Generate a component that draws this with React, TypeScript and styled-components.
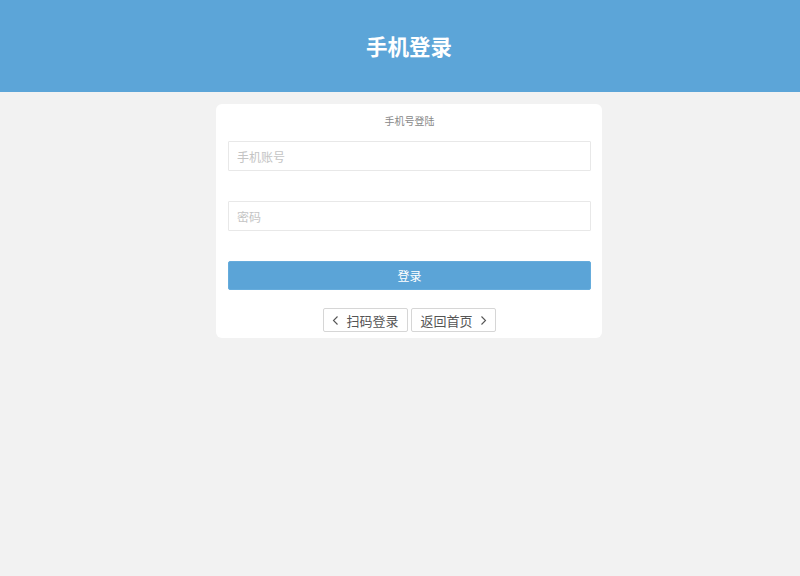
import React from "react";
import styled, { createGlobalStyle } from "styled-components";

const Global = createGlobalStyle`
  html, body { margin: 0; padding: 0; background: #f2f2f2; }
  body { font-family: "Liberation Sans", "Noto Sans CJK SC", sans-serif; }
  * { box-sizing: border-box; }
`;

const Header = styled.header`
  height: 92px;
  background: #5ca5d8;
  display: flex;
  align-items: center;
  justify-content: center;
  padding-left: 18px;
`;

const HeaderTitle = styled.h1`
  margin: 0;
  color: #fff;
  font-size: 21.5px;
  font-weight: bold;
  line-height: 26px;
  font-family: "Noto Sans CJK SC", sans-serif;
`;

const Main = styled.main`
  display: flex;
  justify-content: center;
  padding: 12px 0 0 18px;
`;

const Card = styled.div`
  width: 386px;
  background: #fff;
  border-radius: 6px;
  padding: 10px 11px 6px 12px;
  display: flex;
  flex-direction: column;
`;

const CardTitle = styled.div`
  text-align: center;
  font-size: 10px;
  line-height: 14px;
  color: #888;
  font-family: "Noto Sans CJK SC", sans-serif;
  margin-bottom: 13px;
`;

const Input = styled.input`
  width: 100%;
  height: 30px;
  border: 1px solid #e8e8e8;
  border-radius: 1px;
  padding: 0 8px;
  font-size: 12px;
  color: #333;
  font-family: "Noto Sans CJK SC", sans-serif;
  outline: none;
  margin-bottom: ${(p: { $mb: number }) => p.$mb}px;
  &::placeholder { color: #c4c4c4; }
`;

const Submit = styled.button`
  width: 100%;
  height: 29px;
  border: 1px solid #66acdc;
  border-radius: 2px;
  background: #5ba4d7;
  color: #fff;
  font-size: 12px;
  font-family: "Noto Sans CJK SC", sans-serif;
  cursor: pointer;
  margin-bottom: 18px;
`;

const LinkRow = styled.div`
  display: flex;
  justify-content: center;
  gap: 3px;
`;

const LinkButton = styled.button`
  height: 24px;
  width: 85px;
  border: 1px solid #d6d6d6;
  border-radius: 2px;
  background: #fff;
  color: #555;
  font-size: 13px;
  font-family: "Noto Sans CJK SC", sans-serif;
  display: flex;
  align-items: center;
  justify-content: center;
  gap: 7px;
  padding: 0;
  cursor: pointer;
`;

const Chevron = ({ dir }: { dir: "left" | "right" }) => (
  <svg width="7" height="11" viewBox="0 0 7 11" fill="none" stroke="#555" strokeWidth="1.1">
    {dir === "left" ? <path d="M5.5 1.5 L1.5 5.5 L5.5 9.5" /> : <path d="M1.5 1.5 L5.5 5.5 L1.5 9.5" />}
  </svg>
);

export default function App() {
  return (
    <>
      <Global />
      <Header>
        <HeaderTitle>手机登录</HeaderTitle>
      </Header>
      <Main>
        <Card>
          <CardTitle>手机号登陆</CardTitle>
          <Input $mb={30} placeholder="手机账号" />
          <Input $mb={30} type="password" placeholder="密码" />
          <Submit>登录</Submit>
          <LinkRow>
            <LinkButton>
              <Chevron dir="left" />
              扫码登录
            </LinkButton>
            <LinkButton>
              返回首页
              <Chevron dir="right" />
            </LinkButton>
          </LinkRow>
        </Card>
      </Main>
    </>
  );
}
